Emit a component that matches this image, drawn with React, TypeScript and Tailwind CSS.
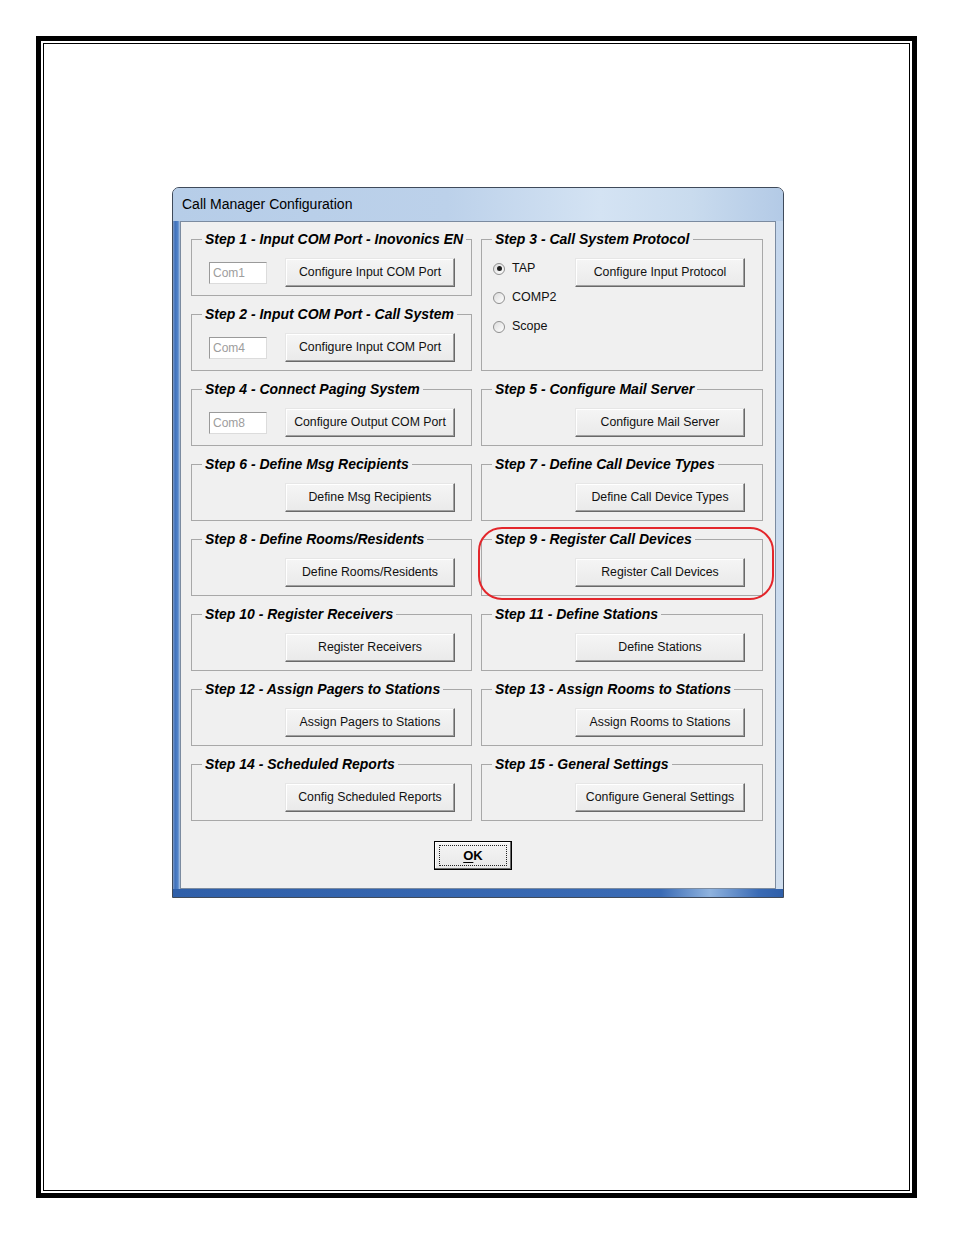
import React from "react";

const FONT = "font-['Liberation_Sans',Arial,sans-serif]";

function Btn({ label }: { label: string }) {
  return (
    <div className="flex h-[29px] w-[170px] items-center justify-center border border-b-[#696969] border-l-[#e6e6e6] border-r-[#696969] border-t-[#e6e6e6] bg-[linear-gradient(#f5f5f5,#eaeaea)] text-[12.3px] leading-none text-[#111] shadow-[inset_-1px_-1px_0_#a0a0a0,inset_1px_1px_0_#ffffff]">
      {label}
    </div>
  );
}

function TextBox({ value }: { value: string }) {
  return (
    <div className="flex h-[22px] w-[58px] items-center border border-b-[#dcdcdc] border-l-[#9a9a9a] border-r-[#dcdcdc] border-t-[#9a9a9a] bg-white pl-[3px] text-[12px] leading-none text-[#9d9d9d]">
      {value}
    </div>
  );
}

function Group({
  title,
  tall,
  children,
  highlight,
}: {
  title: string;
  tall?: boolean;
  children: React.ReactNode;
  highlight?: boolean;
}) {
  return (
    <fieldset
      className={`relative border border-[#a8a8a8] ${tall ? "row-span-2 h-[140px]" : "h-[65px]"}`}
    >
      <legend className="ml-[10px] whitespace-nowrap px-[3px] text-[14px] font-bold italic leading-[16px] text-black">
        {title}
      </legend>
      {children}
      {highlight && (
        <div className="pointer-events-none absolute left-[-4px] top-[-20px] h-[73px] w-[296px] rounded-[24px] border-[2px] border-[#e3262b]" />
      )}
    </fieldset>
  );
}

function Row({ box, label }: { box?: string; label: string }) {
  return (
    <div className="mt-[11px] flex h-[29px] items-center">
      {box ? (
        <div className="flex items-center pl-[17px]">
          <TextBox value={box} />
          <div className="ml-[18px]">
            <Btn label={label} />
          </div>
        </div>
      ) : (
        <div className="pl-[93px]">
          <Btn label={label} />
        </div>
      )}
    </div>
  );
}

function Radio({ label, checked }: { label: string; checked?: boolean }) {
  return (
    <div className="flex h-[21px] items-center">
      <div className="flex h-[12px] w-[12px] items-center justify-center rounded-full border border-[#8f8f8f] bg-[linear-gradient(135deg,#dcdcdc,#ffffff)]">
        {checked && <div className="h-[5px] w-[5px] rounded-full bg-[#1e1e1e]" />}
      </div>
      <span className="ml-[7px] text-[12.5px] leading-none text-[#111]">{label}</span>
    </div>
  );
}

export default function App() {
  return (
    <div className={`h-[1235px] w-[954px] bg-white pl-[36px] pt-[36px] ${FONT}`}>
      <div className="h-[1162px] w-[881px] border-[5px] border-black p-[2px]">
        <div className="h-full w-full border border-black">
          <div className="ml-[128px] mt-[143px] flex h-[711px] w-[612px] flex-col overflow-hidden rounded-t-[7px] border border-[#3f4a5a] bg-[#c6d7eb]">
            {/* Title bar */}
            <div className="flex h-[33px] items-center bg-[linear-gradient(to_right,#b6cde8,#bcd1ea_45%,#d4e3f3_70%,#c9dbee_85%,#b3cae6)] pl-[9px] text-[14px] text-black">
              Call Manager Configuration
            </div>
            <div className="flex flex-1">
              <div className="w-[7px] bg-[linear-gradient(to_right,#7f9cc6,#3f71bc_30%,#5384c8_70%,#b3c9e4)]" />
              <div className="w-[596px] border border-[#7b8ba0] bg-[#f0f0f0]">
                <div className="grid auto-rows-[65px] grid-cols-[281px_282px] gap-x-[9px] gap-y-[10px] pl-[10px] pt-[9px]">
                  <Group title="Step 1 - Input COM Port - Inovonics EN">
                    <Row box="Com1" label="Configure Input COM Port" />
                  </Group>
                  <Group title="Step 3 - Call System Protocol" tall>
                    <div className="mt-[11px] flex">
                      <div className="flex w-[93px] flex-col gap-[8px] pl-[11px]">
                        <Radio label="TAP" checked />
                        <Radio label="COMP2" />
                        <Radio label="Scope" />
                      </div>
                      <Btn label="Configure Input Protocol" />
                    </div>
                  </Group>
                  <Group title="Step 2 - Input COM Port - Call System">
                    <Row box="Com4" label="Configure Input COM Port" />
                  </Group>
                  <Group title="Step 4 - Connect Paging System">
                    <Row box="Com8" label="Configure Output COM Port" />
                  </Group>
                  <Group title="Step 5 - Configure Mail Server">
                    <Row label="Configure Mail Server" />
                  </Group>
                  <Group title="Step 6 - Define Msg Recipients">
                    <Row label="Define Msg Recipients" />
                  </Group>
                  <Group title="Step 7 - Define Call Device Types">
                    <Row label="Define Call Device Types" />
                  </Group>
                  <Group title="Step 8 - Define Rooms/Residents">
                    <Row label="Define Rooms/Residents" />
                  </Group>
                  <Group title="Step 9 - Register Call Devices" highlight>
                    <Row label="Register Call Devices" />
                  </Group>
                  <Group title="Step 10 - Register Receivers">
                    <Row label="Register Receivers" />
                  </Group>
                  <Group title="Step 11 - Define Stations">
                    <Row label="Define Stations" />
                  </Group>
                  <Group title="Step 12 - Assign Pagers to Stations">
                    <Row label="Assign Pagers to Stations" />
                  </Group>
                  <Group title="Step 13 - Assign Rooms to Stations">
                    <Row label="Assign Rooms to Stations" />
                  </Group>
                  <Group title="Step 14 - Scheduled Reports">
                    <Row label="Config Scheduled Reports" />
                  </Group>
                  <Group title="Step 15 - General Settings">
                    <Row label="Configure General Settings" />
                  </Group>
                </div>
                <div className="mt-[20px] pl-[253px]">
                  <div className="flex h-[29px] w-[78px] items-center justify-center border border-black bg-[linear-gradient(#f5f5f5,#e8e8e8)] shadow-[inset_-1px_-1px_0_#696969,inset_1px_1px_0_#ffffff]">
                    <div className="flex h-[21px] w-[68px] items-center justify-center border border-dotted border-[#222]">
                      <span className="text-[13px] font-bold leading-none text-black">
                        <span className="underline underline-offset-2">O</span>K
                      </span>
                    </div>
                  </div>
                </div>
              </div>
              <div className="flex-1 bg-[linear-gradient(#c4d6ec,#d0deee)]" />
            </div>
            <div className="h-[8px] bg-[linear-gradient(to_right,#2f5fa9,#3a6bb5_80%,#8fb3df_88%,#3a6bb5_96%,#2f5fa9)]" />
          </div>
        </div>
      </div>
    </div>
  );
}
